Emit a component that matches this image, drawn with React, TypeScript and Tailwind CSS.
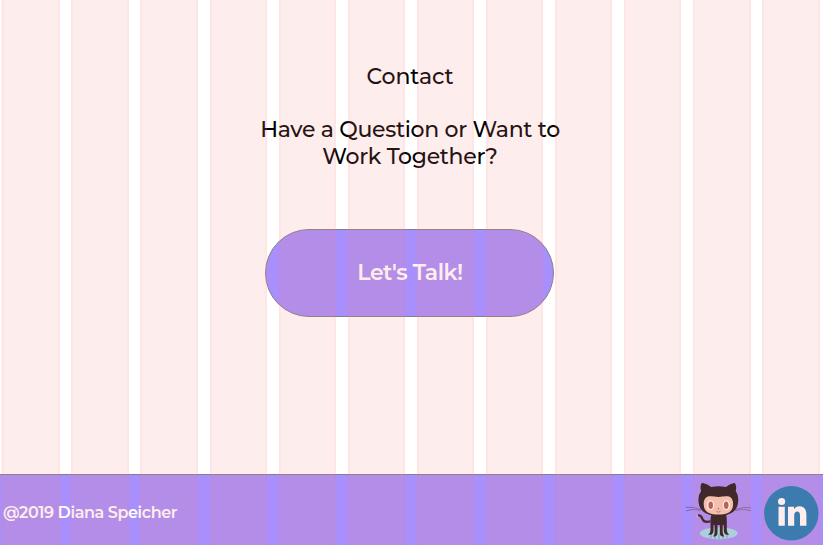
// Each entry is one grid column: its width and the gutter that follows it.
const wide = "w-[58px] mr-[11px]";
const wideLast = "w-[58px] mr-[12px]";
const narrow = "w-[57px] mr-[12px]";
const columns = [wide, wide, wideLast, narrow, narrow, narrow, narrow, narrow, narrow, narrow, wide, wide];

function GridOverlay() {
  return (
    <div className="pointer-events-none absolute inset-0 flex overflow-hidden pl-[1px]">
      <div className="w-px shrink-0 bg-[#ff8585]/[0.08]" />
      {columns.map((c, i) => (
        <div key={i} className={`${c} shrink-0 border-x-2 border-[#ff7070]/5 bg-[#f98787]/[0.15]`} />
      ))}
    </div>
  );
}

function Octocat() {
  return (
    <svg viewBox="685 480 68 62" className="mt-[2px] h-[62px] w-[68px]" fill="none" aria-label="GitHub">
      <ellipse cx="718.7" cy="533.3" rx="18.8" ry="6.1" fill="#9fdcec" />
      <path d="M711 533v5M715 534v6M719 534v6M723 534v5M727 533v5" stroke="#79b8d2" strokeWidth="1.6" />
      <path d="M685.5 507.2 Q693 506.5 701 509.5 M686 510.8 Q693 508 701 510.5 M735 509.5 Q744 506.5 751 507.6 M735 510.5 Q744 508.2 751 510.6" stroke="#62426f" strokeWidth=".7" opacity=".8" />
      <path d="M698 515.2 Q701.5 515.5 702.4 519 Q704 523 710.5 521.3" stroke="#2b1d20" strokeWidth="2.2" />
      <path d="M697.3 514.8v2.6" stroke="#9fd8e8" strokeWidth=".8" />
      <path d="M711.5 514 H726 Q727 518 726.8 522 V530 Q727 533.5 729.2 534.5 Q724.5 536 723.8 531 V525 H722.7 V532 Q723 535.5 724.3 536.2 Q720 537.2 719.8 533 V525 H717.5 V533 Q717.2 537.2 713 536.2 Q714.6 535.5 714.6 532 V525 H713.5 V531 Q712.7 536 708.2 534.5 Q710.5 533.5 710.5 530 V522 Q710.2 518 711.5 514Z" fill="#21181a" />
      <path d="M701.2 484 Q701.5 482.8 703 483.1 Q707.5 484.2 711.2 487.1 Q718.5 485.4 725.8 487.1 Q729.5 484.2 734 483.1 Q735.1 482.9 735.4 484 Q736.8 487.4 735.7 491 Q738.3 494.5 738.3 499.5 C738.3 510.5 731.5 515.7 718.4 515.7 C705.3 515.7 698.4 510.5 698.4 499.5 Q698.4 494.5 701.1 491 Q699.9 487.4 701.2 484Z" fill="#21181a" />
      <path d="M709 496.3 Q713 496 718.4 497 Q724 496 727.8 496.3 C731.2 496.5 733.1 499.7 733.1 503.8 C733.1 511.8 728 514.5 718.4 514.5 C708.8 514.5 703.7 511.8 703.7 503.8 C703.7 499.7 705.8 496.5 709 496.3Z" fill="#f4cbb2" />
      <g fill="#fff">
        <ellipse cx="710.5" cy="505.2" rx="3.6" ry="4.9" />
        <ellipse cx="726.4" cy="505.2" rx="3.6" ry="4.9" />
      </g>
      <g fill="#ad5c51">
        <ellipse cx="710.7" cy="505.2" rx="2.3" ry="3.7" />
        <ellipse cx="726.2" cy="505.2" rx="2.3" ry="3.7" />
        <circle cx="718.4" cy="508.8" r=".8" />
      </g>
      <path d="M716.3 511.2 Q718.4 513.4 720.5 511.2" stroke="#ad5c51" strokeWidth=".8" />
    </svg>
  );
}

function LinkedIn() {
  return (
    <svg viewBox="764 486 55 55" className="h-[55px] w-[55px]" aria-label="LinkedIn">
      <circle cx="791.3" cy="513.3" r="27.2" fill="#1a7ab5" />
      <circle cx="781.6" cy="501.5" r="3.6" fill="#fff" />
      <path d="M778.5 506.7h6.3v19h-6.3zM788 506.7h6v2.5c1.2-2 3-3 5.2-3 5.1 0 7.2 3.4 7.2 8.7v10.8H800v-9.9c0-2.8-.6-4.4-2.7-4.4-2.2 0-3.1 1.6-3.1 4.6v9.7H788z" fill="#fff" />
    </svg>
  );
}

export default function App() {
  return (
    <div className="relative flex h-[545px] w-[823px] flex-col overflow-hidden bg-white font-['Montserrat','Inter','Liberation_Sans',sans-serif] text-black">
      <main className="flex flex-1 flex-col items-center pr-[3px] pt-[63px] text-center">
        <h1 className="text-[22px] font-medium leading-[27px] tracking-[-0.08px]">Contact</h1>
        <p className="mt-[26px] whitespace-nowrap text-[22px] font-medium leading-[27px] tracking-[-0.3px]">
          Have a Question or Want to
          <br />
          Work Together?
        </p>
        <button className="mr-[2px] mt-[59px] h-[88px] w-[289px] rounded-[44px] border border-[#858088] bg-[#a98ffb] pb-[2px] pl-[2px] text-[22px] font-semibold tracking-[-0.5px] text-white">
          Let's Talk!
        </button>
      </main>
      <footer className="flex h-[71px] shrink-0 items-center border-t border-[#858088] bg-[#a98ffb] pl-[3px] pr-1">
        <span className="mt-[6px] text-[16px] font-semibold leading-5 tracking-[-0.4px] text-white">@2019 Diana Speicher</span>
        <div className="ml-auto flex items-center gap-[11px]">
          <Octocat />
          <div className="mt-[7px]"><LinkedIn /></div>
        </div>
      </footer>
      <GridOverlay />
    </div>
  );
}
